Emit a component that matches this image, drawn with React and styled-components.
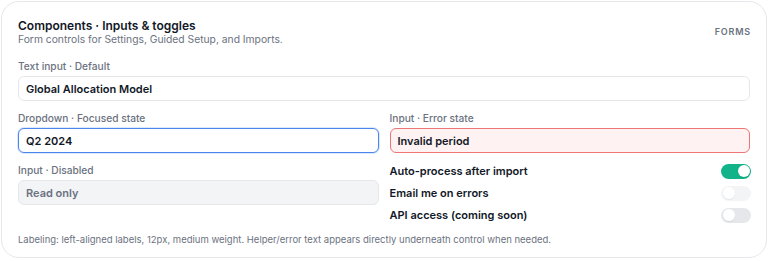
import React from "react";
import styled, { createGlobalStyle } from "styled-components";

const GlobalStyle = createGlobalStyle`
  * { box-sizing: border-box; }
  body {
    margin: 0;
    padding: 1px;
    background: #ffffff;
    font-family: Inter, "Noto Sans", sans-serif;
    color: #111827;
  }
`;

const Card = styled.section`
  width: 766px;
  height: 257px;
  border: 1px solid #e5e7eb;
  border-radius: 18px;
  background: #ffffff;
  padding: 16px 16px 11px;
  display: flex;
  flex-direction: column;
`;

const Header = styled.header`
  display: flex;
  justify-content: space-between;
  align-items: center;
`;

const Title = styled.h2`
  margin: 0;
  font-size: 12px;
  line-height: 15px;
  font-weight: 600;
  color: #111827;
`;

const Subtitle = styled.p`
  margin: 0;
  font-size: 10.3px;
  line-height: 12px;
  color: #6b7280;
`;

const Tag = styled.span`
  font-size: 9px;
  font-weight: 600;
  letter-spacing: 0.09em;
  color: #6b7280;
  margin-right: -1px;
`;

const Body = styled.div`
  margin-top: 15px;
  display: grid;
  grid-template-columns: 1fr 1fr;
  column-gap: 11px;
  row-gap: 11px;
`;

const Field = styled.div`
  display: flex;
  flex-direction: column;
  gap: 3px;
  grid-column: ${(p) => (p.$wide ? "1 / -1" : "auto")};
`;

const Column = styled.div`
  display: flex;
  flex-direction: column;
  gap: 11px;
`;

const Label = styled.label`
  font-size: 10.2px;
  line-height: 13px;
  font-weight: 500;
  color: #6b7280;
`;

const tones = {
  default: { border: "#e5e7eb", bg: "#ffffff", color: "#111827", ring: "none" },
  focus: { border: "#4b86ea", bg: "#ffffff", color: "#111827", ring: "0 0 0 1px rgba(59,130,246,0.18)" },
  error: { border: "#ee7575", bg: "#fef2f2", color: "#111827", ring: "none" },
  disabled: { border: "#e5e7eb", bg: "#f3f4f6", color: "#6b7280", ring: "none" },
};

const Input = styled.div`
  height: 25px;
  border: 1px solid ${(p) => tones[p.$tone].border};
  background: ${(p) => tones[p.$tone].bg};
  box-shadow: ${(p) => tones[p.$tone].ring};
  border-radius: 6px;
  padding: 0 7px;
  display: flex;
  align-items: center;
  font-size: 11px;
  font-weight: 600;
  color: ${(p) => tones[p.$tone].color};
`;

const Toggles = styled.div`
  display: flex;
  flex-direction: column;
  margin-top: -4px;
`;

const ToggleRow = styled.div`
  display: flex;
  align-items: center;
  justify-content: space-between;
  height: 22px;
  font-size: 11px;
  font-weight: 600;
  color: #111827;
`;

const Switch = styled.span`
  position: relative;
  width: 30px;
  height: 15px;
  margin-right: -1px;
  border-radius: 999px;
  background: ${(p) => (p.$on ? "#12b388" : p.$muted ? "#f3f4f6" : "#e5e7eb")};
  flex-shrink: 0;

  &::after {
    content: "";
    position: absolute;
    top: 1.5px;
    left: ${(p) => (p.$on ? "16.5px" : "1.5px")};
    width: 12px;
    height: 12px;
    border-radius: 50%;
    background: #ffffff;
    box-shadow: 0 1px 1px rgba(0, 0, 0, 0.06);
  }
`;

const Footer = styled.p`
  margin: auto 0 0;
  font-size: 9.5px;
  line-height: 12px;
  color: #6b7280;
`;

const toggles = [
  { label: "Auto-process after import", on: true },
  { label: "Email me on errors", muted: true },
  { label: "API access (coming soon)" },
];

export default function App() {
  return (
    <>
      <GlobalStyle />
      <Card>
        <Header>
          <div>
            <Title>Components · Inputs &amp; toggles</Title>
            <Subtitle>Form controls for Settings, Guided Setup, and Imports.</Subtitle>
          </div>
          <Tag>FORMS</Tag>
        </Header>
        <Body>
          <Field $wide>
            <Label>Text input · Default</Label>
            <Input $tone="default">Global Allocation Model</Input>
          </Field>
          <Column>
            <Field>
              <Label>Dropdown · Focused state</Label>
              <Input $tone="focus">Q2 2024</Input>
            </Field>
            <Field>
              <Label>Input · Disabled</Label>
              <Input $tone="disabled">Read only</Input>
            </Field>
          </Column>
          <Column>
            <Field>
              <Label>Input · Error state</Label>
              <Input $tone="error">Invalid period</Input>
            </Field>
            <Toggles>
              {toggles.map((t) => (
                <ToggleRow key={t.label}>
                  {t.label}
                  <Switch $on={t.on} $muted={t.muted} />
                </ToggleRow>
              ))}
            </Toggles>
          </Column>
        </Body>
        <Footer>
          Labeling: left-aligned labels, 12px, medium weight. Helper/error text appears directly underneath control when needed.
        </Footer>
      </Card>
    </>
  );
}
